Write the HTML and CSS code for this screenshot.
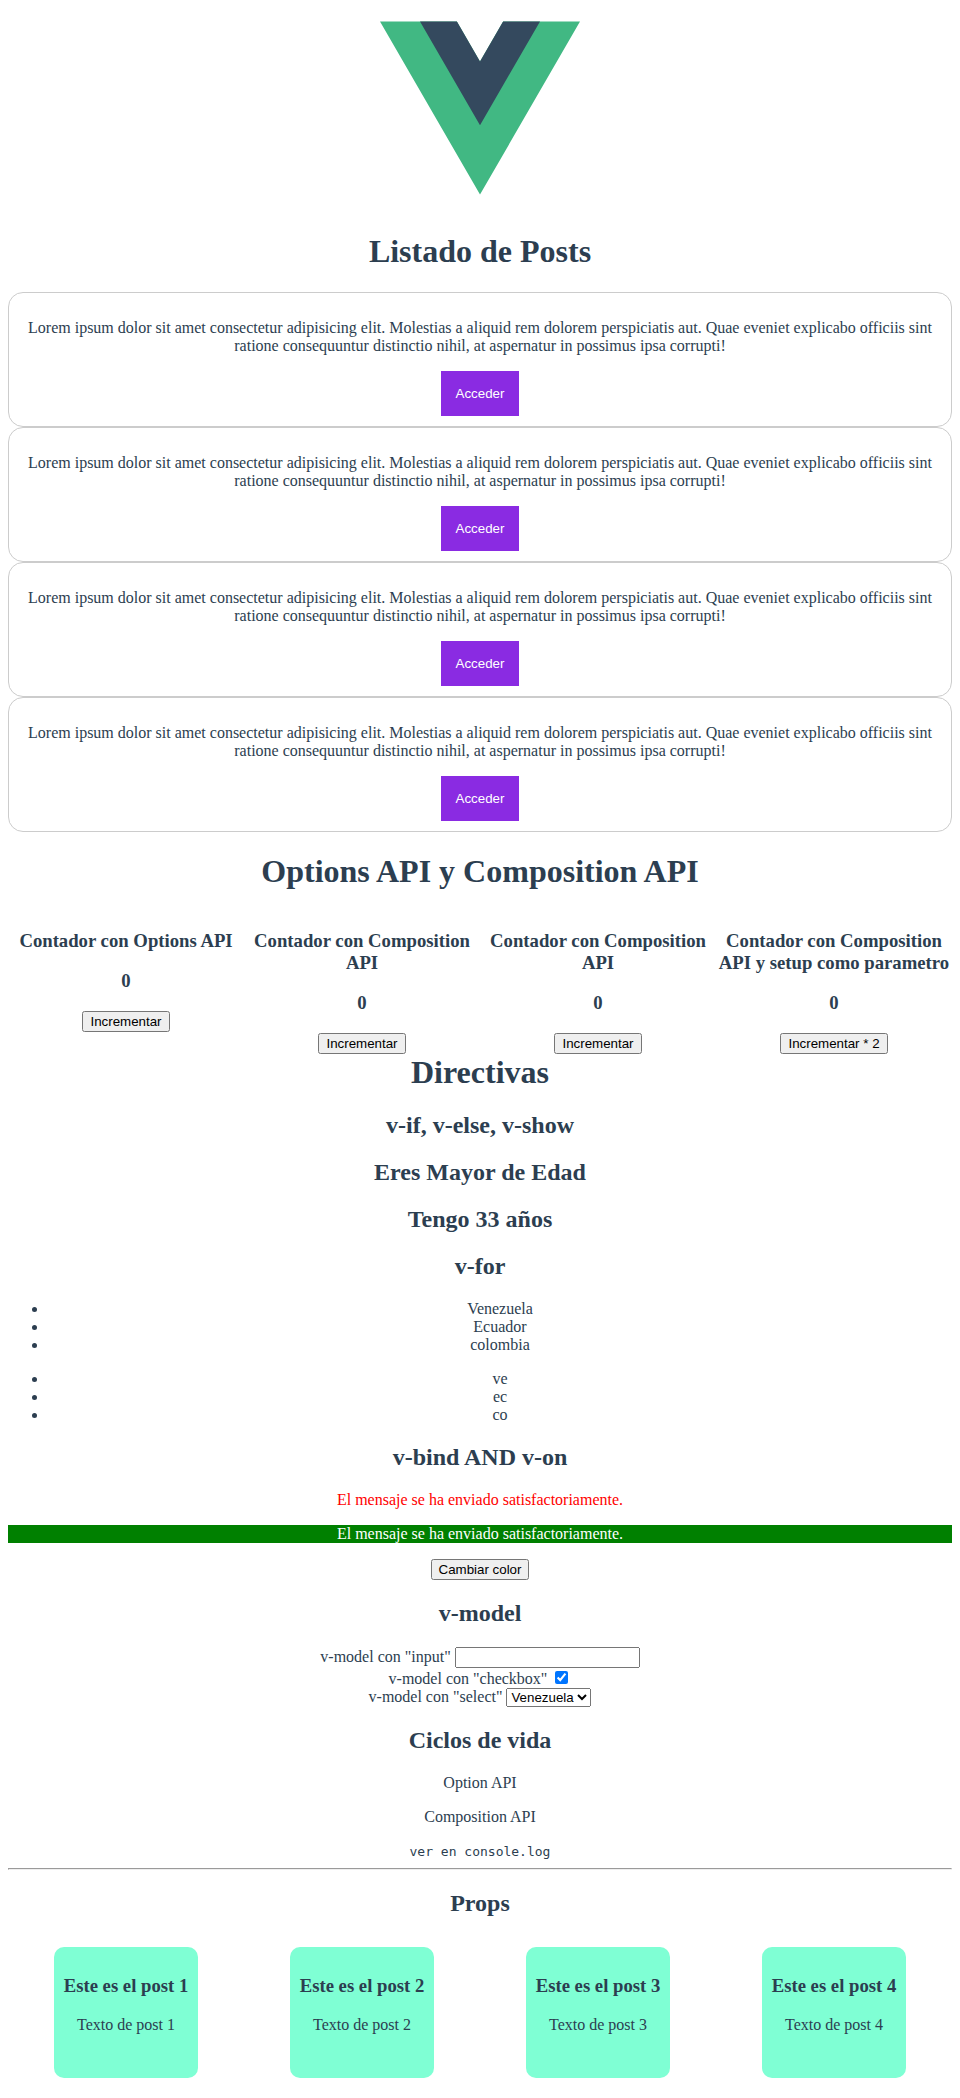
FILE: index.html
```html
<!DOCTYPE html>
<html lang="es">
<head>
<meta charset="utf-8">
<title>Vue</title>
<link rel="stylesheet" href="styles.css">
</head>
<body>
<div class="app">
<svg class="logo" width="200" height="200" viewBox="0 0 200 200"><path d="M0 13.4h76.9L100 53.4l23.1-40H200L100 186.6z" fill="#41b883"/><path d="M40 13.4h36.9L100 53.4l23.1-40H160L100 117.3z" fill="#34495e"/></svg>
<h1>Listado de Posts</h1>
<div class="card"><p>Lorem ipsum dolor sit amet consectetur adipisicing elit. Molestias a aliquid rem dolorem perspiciatis aut. Quae eveniet explicabo officiis sint ratione consequuntur distinctio nihil, at aspernatur in possimus ipsa corrupti!</p><button class="access">Acceder</button></div>
<div class="card"><p>Lorem ipsum dolor sit amet consectetur adipisicing elit. Molestias a aliquid rem dolorem perspiciatis aut. Quae eveniet explicabo officiis sint ratione consequuntur distinctio nihil, at aspernatur in possimus ipsa corrupti!</p><button class="access">Acceder</button></div>
<div class="card"><p>Lorem ipsum dolor sit amet consectetur adipisicing elit. Molestias a aliquid rem dolorem perspiciatis aut. Quae eveniet explicabo officiis sint ratione consequuntur distinctio nihil, at aspernatur in possimus ipsa corrupti!</p><button class="access">Acceder</button></div>
<div class="card"><p>Lorem ipsum dolor sit amet consectetur adipisicing elit. Molestias a aliquid rem dolorem perspiciatis aut. Quae eveniet explicabo officiis sint ratione consequuntur distinctio nihil, at aspernatur in possimus ipsa corrupti!</p><button class="access">Acceder</button></div>
<h1 class="api-title">Options API y Composition API</h1>
<div class="counters">
<div><h3>Contador con Options API</h3><h3>0</h3><button>Incrementar</button></div>
<div><h3>Contador con Composition API</h3><h3>0</h3><button>Incrementar</button></div>
<div><h3>Contador con Composition API</h3><h3>0</h3><button>Incrementar</button></div>
<div><h3>Contador con Composition API y setup como parametro</h3><h3>0</h3><button>Incrementar * 2</button></div>
</div>
<h1 class="directives">Directivas</h1>
<h2>v-if, v-else, v-show</h2>
<h2>Eres Mayor de Edad</h2>
<h2>Tengo 33 años</h2>
<h2>v-for</h2>
<ul><li>Venezuela</li><li>Ecuador</li><li>colombia</li></ul>
<ul><li>ve</li><li>ec</li><li>co</li></ul>
<h2>v-bind AND v-on</h2>
<p class="error">El mensaje se ha enviado satisfactoriamente.</p>
<p class="success">El mensaje se ha enviado satisfactoriamente.</p>
<button>Cambiar color</button>
<h2>v-model</h2>
<div><label>v-model con "input"</label> <input type="text"></div>
<div><label>v-model con "checkbox"</label> <input type="checkbox" checked></div>
<div><label>v-model con "select"</label> <select><option>Venezuela</option><option>Ecuador</option><option>colombia</option></select></div>
<h2 class="lifecycle">Ciclos de vida</h2>
<p>Option API</p>
<p>Composition API</p>
<code>ver en console.log</code>
<hr>
<h2>Props</h2>
<div class="props">
<div class="post"><h3>Este es el post 1</h3><p>Texto de post 1</p></div>
<div class="post"><h3>Este es el post 2</h3><p>Texto de post 2</p></div>
<div class="post"><h3>Este es el post 3</h3><p>Texto de post 3</p></div>
<div class="post"><h3>Este es el post 4</h3><p>Texto de post 4</p></div>
</div>
</div>
</body>
</html>
```
FILE: styles.css
```css
.app {
  font-family: "Liberation Serif", serif;
  text-align: center;
  color: #2c3e50;
}
.card {
  border: 1px solid #ccc;
  border-radius: 15px;
  padding: 10px;
}
.access {
  background: blueviolet;
  color: white;
  border: 0;
  padding: 15px;
}
.api-title {
  margin-bottom: 20.5px;
}
.counters {
  display: grid;
  grid-template-columns: repeat(4, 1fr);
}
.directives {
  margin-top: 0;
}
.error {
  color: red;
}
.success {
  color: white;
  background: green;
}
.lifecycle {
  margin-bottom: 20.3px;
}
.props {
  display: flex;
  justify-content: space-around;
  padding-top: 10px;
}
.post {
  background: aquamarine;
  border-radius: 10px;
  padding: 10px;
  height: 111px;
}
```
